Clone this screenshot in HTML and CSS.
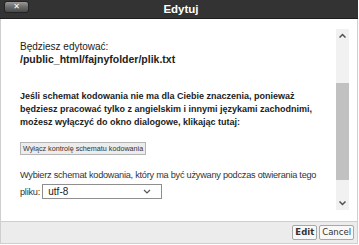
FILE: index.html
```html
<!DOCTYPE html>
<html lang="pl">
<head>
<meta charset="UTF-8">
<meta name="viewport" content="width=device-width, initial-scale=1.0">
<title>Edytuj</title>
<link rel="stylesheet" href="styles.css">
</head>
<body>

<div class="dialog">
<div class="titlebar">
<div class="left"><button class="close">&#x2715;</button></div>
<span class="title">Edytuj</span>
<div></div>
</div>

<div class="body">
<div class="scrollbox">
<div class="content">
<p class="file">Będziesz edytować:<br><b>/public_html/fajnyfolder/plik.txt</b></p>

<p class="warn">Jeśli schemat kodowania nie ma dla Ciebie znaczenia, ponieważ będziesz pracować tylko z angielskim i innymi językami zachodnimi, możesz wyłączyć do okno dialogowe, klikając tutaj:</p>

<button class="small-btn">Wyłącz kontrolę schematu kodowania</button>

<p class="choose">Wybierz schemat kodowania, który ma być używany podczas otwierania tego pliku:
<span class="select-wrap">
<select class="select">
<option>utf-8</option>
</select>
<svg class="chev" width="8" height="5" viewBox="0 0 8 5"><path d="M1 1l3 3 3-3" fill="none" stroke="#555" stroke-width="1.2"/></svg>
</span>
</p>
</div>

<div class="scrollbar">
<div class="arrow"><svg width="7" height="5" viewBox="0 0 7 5"><path d="M0.5 4.5l3-3 3 3" fill="none" stroke="#505050" stroke-width="1.5"/></svg></div>
<div class="track-top"></div>
<div class="thumb"></div>
<div class="track-bottom"></div>
<div class="arrow"><svg width="7" height="5" viewBox="0 0 7 5"><path d="M0.5 0.5l3 3 3-3" fill="none" stroke="#505050" stroke-width="1.5"/></svg></div>
</div>
</div>
</div>

<div class="footer">
<button class="btn btn-edit">Edit</button>
<button class="btn">Cancel</button>
</div>
</div>

</body>
</html>
```

FILE: styles.css
```css
body {
margin: 0;
font-family: "Liberation Sans", Arial, sans-serif;
background-color: #ffffff;
}

.dialog {
width: 356px;
height: 243px;
border: 1px solid #cfcfcf;
border-top: none;
display: flex;
flex-direction: column;
background-color: #ffffff;
}

.titlebar {
height: 18px;
background-color: #333333;
border-bottom: 1px solid #1e1e1e;
display: grid;
grid-template-columns: 1fr auto 1fr;
align-items: center;
margin: 0 -1px;
}

.left {
display: flex;
padding-left: 4px;
}

.close {
width: 25px;
height: 12px;
margin-top: -4px;
padding: 0;
border: 1px solid #222;
border-radius: 3px;
background: linear-gradient(#9a9a9a, #6a6a6a 50%, #4a4a4a);
color: #ffffff;
font-size: 8px;
font-weight: bold;
line-height: 10px;
font-family: "DejaVu Sans", sans-serif;
}

.title {
color: #ffffff;
font-weight: bold;
font-size: 11.5px;
padding-left: 4px;
}

.body {
flex: 1;
padding: 10px 8px 10px 9px;
}

.scrollbox {
height: 181px;
display: flex;
}

.content {
flex: 1;
padding: 0 3px 0 10px;
font-size: 9.2px;
line-height: 13px;
color: #222;
}

.content p {
margin: 0;
}

.file {
padding-top: 11px;
font-size: 10px;
}

.file b {
font-size: 10.5px;
}

.warn {
font-weight: bold;
font-size: 9px;
padding-top: 24px;
padding-right: 5px;
}

.small-btn {
display: block;
margin-top: 13px;
height: 13px;
padding: 0 2px;
font-family: "Liberation Sans", Arial, sans-serif;
font-size: 7.2px;
color: #333;
background-color: #ececec;
border: 1px solid #b5b5b5;
border-radius: 0;
line-height: 11px;
}

.choose {
margin-top: 12px !important;
color: #333;
line-height: 17px;
letter-spacing: -0.25px;
}

.select-wrap {
display: inline-flex;
align-items: center;
vertical-align: middle;
margin-top: -3px;
letter-spacing: 0;
}

.select {
appearance: none;
width: 120px;
height: 15px;
padding: 0 5px;
border: 1px solid #8e8e8e;
border-radius: 0;
background: #ffffff;
font-family: "Liberation Sans", Arial, sans-serif;
font-size: 10px;
color: #222;
}

.chev {
margin-left: -19px;
}

.scrollbar {
width: 13px;
display: flex;
flex-direction: column;
background-color: #f1f1f1;
}

.arrow {
height: 13px;
display: flex;
align-items: center;
justify-content: center;
}

.track-top {
height: 41px;
}

.thumb {
height: 97px;
background-color: #c1c1c1;
}

.track-bottom {
flex: 1;
}

.footer {
height: 21px;
background-color: #ececec;
border-top: 1px solid #cfcfcf;
display: flex;
justify-content: flex-end;
align-items: center;
gap: 2px;
padding-right: 3px;
}

.btn {
height: 15px;
padding: 0 2px;
font-family: "DejaVu Sans", Verdana, sans-serif;
font-size: 8.5px;
color: #333;
background-color: #f8f8f8;
border: 1px solid #a8a8a8;
border-radius: 2px;
line-height: 13px;
}

.btn-edit {
font-weight: bold;
}
```
